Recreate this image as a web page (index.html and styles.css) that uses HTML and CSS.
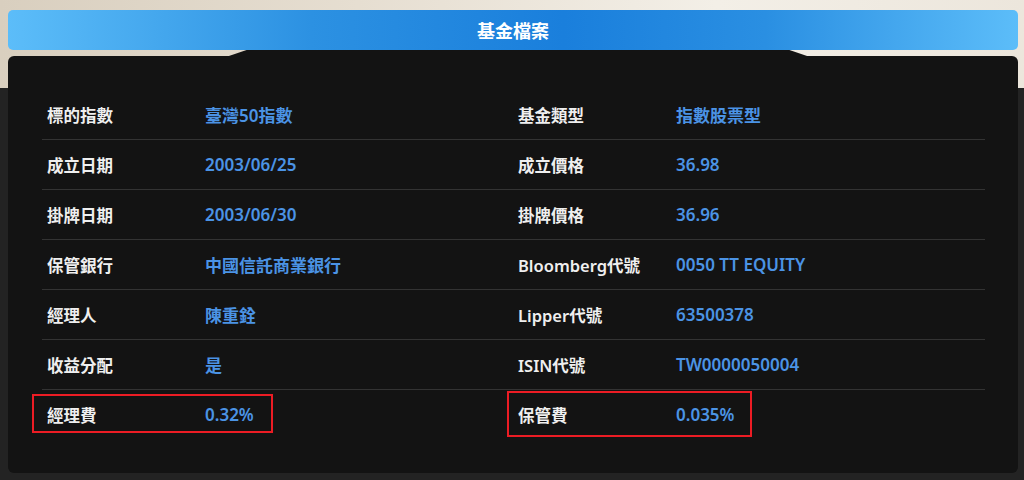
FILE: index.html
```html
<!DOCTYPE html>
<html lang="zh-Hant">
  <head>
    <meta charset="UTF-8" />
    <meta name="viewport" content="width=device-width, initial-scale=1.0" />
    <title>基金檔案</title>
    <link rel="stylesheet" href="styles.css">
  </head>
  <body>
    <div class="page">
      <!-- Title bar -->
      <div class="title-bar">基金檔案</div>

      <!-- Fund profile -->
      <div class="panel">
        <div class="grid">
          <div class="row"><span class="label">標的指數</span><span class="value">臺灣50指數</span></div>
          <div class="row"><span class="label">基金類型</span><span class="value">指數股票型</span></div>

          <div class="row"><span class="label">成立日期</span><span class="value">2003/06/25</span></div>
          <div class="row"><span class="label">成立價格</span><span class="value">36.98</span></div>

          <div class="row"><span class="label">掛牌日期</span><span class="value">2003/06/30</span></div>
          <div class="row"><span class="label">掛牌價格</span><span class="value">36.96</span></div>

          <div class="row"><span class="label">保管銀行</span><span class="value">中國信託商業銀行</span></div>
          <div class="row"><span class="label">Bloomberg代號</span><span class="value">0050 TT EQUITY</span></div>

          <div class="row"><span class="label">經理人</span><span class="value">陳重銓</span></div>
          <div class="row"><span class="label">Lipper代號</span><span class="value">63500378</span></div>

          <div class="row"><span class="label">收益分配</span><span class="value">是</span></div>
          <div class="row"><span class="label">ISIN代號</span><span class="value">TW0000050004</span></div>

          <div class="row last"><span class="label">經理費</span><span class="value">0.32%</span><span class="mark mark-left"></span></div>
          <div class="row last"><span class="label">保管費</span><span class="value">0.035%</span><span class="mark mark-right"></span></div>
        </div>
      </div>
    </div>
  </body>
</html>
```

FILE: styles.css
```css
html,
body {
  margin: 0;
  height: 100%;
}
body {
  font-family: "Noto Sans", "Noto Sans CJK TC", sans-serif;
  background: linear-gradient(to bottom, transparent 0, transparent 88px, #232323 88px),
    linear-gradient(to right, #d9cfbf 0%, #e6ded1 35%, #f3efe7 70%, #ece6dc 100%);
}
.page {
  padding: 10px 6px 0 8px;
}
.title-bar {
  position: relative;
  z-index: 1;
  height: 40px;
  line-height: 40px;
  border-radius: 5px;
  text-align: center;
  color: #fff;
  font-family: "Noto Sans CJK TC", sans-serif;
  font-size: 18px;
  font-weight: 700;
  background: linear-gradient(to right, #5cbdf9 0%, #2c91e2 30%, #1a7fdc 55%, #2a8fe2 75%, #5cbdf9 100%);
}
.panel {
  position: relative;
  margin-top: 6px;
  height: 417px;
  background: #131313;
  border-radius: 6px;
  padding: 34px 33px 0 34px;
  box-sizing: border-box;
}
.panel::before {
  content: "";
  position: absolute;
  top: -6px;
  left: 215px;
  width: 590px;
  height: 8px;
  background: #131313;
  clip-path: polygon(4% 0, 96% 0, 100% 100%, 0 100%);
}
.grid {
  display: grid;
  grid-template-columns: 471px 472px;
}
.row {
  position: relative;
  display: flex;
  align-items: center;
  height: 49px;
  border-bottom: 1px solid #333;
  font-size: 16.5px;
}
.row.last {
  border-bottom: none;
}
.label {
  width: 158px;
  padding-left: 5px;
  color: #efefef;
  font-weight: 600;
}
.value {
  color: #4b93e5;
  font-size: 17px;
  font-weight: 600;
}
.mark {
  position: absolute;
  border: 2px solid #ec1c24;
}
.mark-left {
  left: -10px;
  top: 4px;
  width: 237px;
  height: 35px;
}
.mark-right {
  left: -6px;
  top: 1px;
  width: 241px;
  height: 42px;
}
```
